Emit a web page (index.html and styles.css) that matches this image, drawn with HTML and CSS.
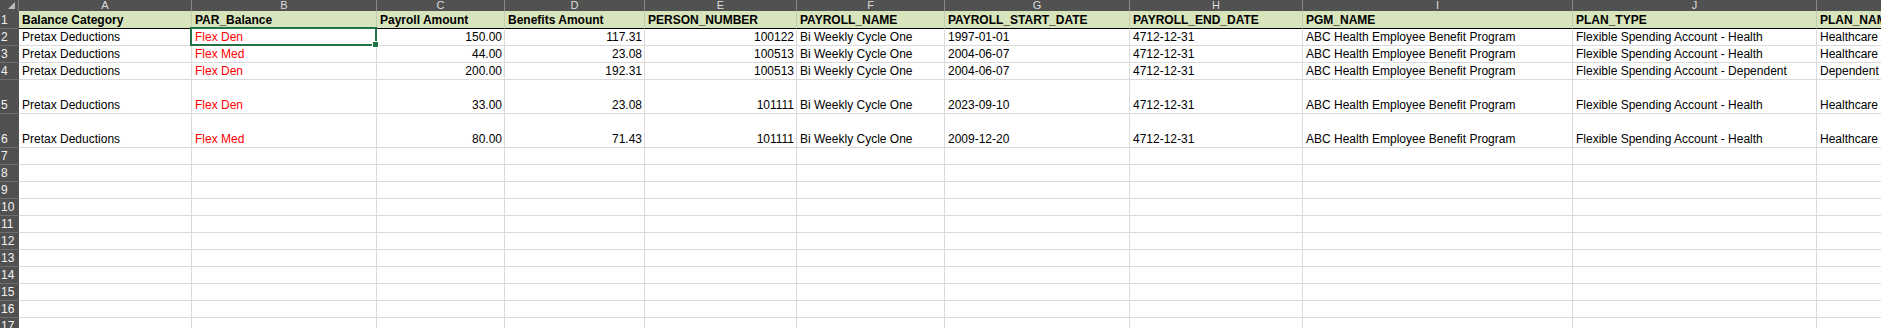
FILE: index.html
```html
<!DOCTYPE html>
<html>
<head>
<meta charset="utf-8">
<link rel="stylesheet" href="styles.css">
</head>
<body>
<div class="sheet">
  <div class="row colhdr">
    <div class="corner"><span class="tri"></span></div>
    <div class="ch">A</div><div class="ch">B</div><div class="ch">C</div><div class="ch">D</div><div class="ch">E</div><div class="ch">F</div><div class="ch">G</div><div class="ch">H</div><div class="ch">I</div><div class="ch">J</div><div class="ch">K</div>
  </div>
  <div class="row head">
    <div class="rh">1</div>
    <div class="c b">Balance Category</div>
    <div class="c b">PAR_Balance</div>
    <div class="c b">Payroll Amount</div>
    <div class="c b">Benefits Amount</div>
    <div class="c b">PERSON_NUMBER</div>
    <div class="c b">PAYROLL_NAME</div>
    <div class="c b">PAYROLL_START_DATE</div>
    <div class="c b">PAYROLL_END_DATE</div>
    <div class="c b">PGM_NAME</div>
    <div class="c b">PLAN_TYPE</div>
    <div class="c b">PLAN_NAME</div>
  </div>
  <div class="row">
    <div class="rh">2</div>
    <div class="c">Pretax Deductions</div>
    <div class="c red selected">Flex Den<span class="handle"></span></div>
    <div class="c r">150.00</div>
    <div class="c r">117.31</div>
    <div class="c r">100122</div>
    <div class="c">Bi Weekly Cycle One</div>
    <div class="c">1997-01-01</div>
    <div class="c">4712-12-31</div>
    <div class="c">ABC Health Employee Benefit Program</div>
    <div class="c">Flexible Spending Account - Health</div>
    <div class="c">Healthcare FSA</div>
  </div>
  <div class="row">
    <div class="rh">3</div>
    <div class="c">Pretax Deductions</div>
    <div class="c red">Flex Med</div>
    <div class="c r">44.00</div>
    <div class="c r">23.08</div>
    <div class="c r">100513</div>
    <div class="c">Bi Weekly Cycle One</div>
    <div class="c">2004-06-07</div>
    <div class="c">4712-12-31</div>
    <div class="c">ABC Health Employee Benefit Program</div>
    <div class="c">Flexible Spending Account - Health</div>
    <div class="c">Healthcare FSA</div>
  </div>
  <div class="row">
    <div class="rh">4</div>
    <div class="c">Pretax Deductions</div>
    <div class="c red">Flex Den</div>
    <div class="c r">200.00</div>
    <div class="c r">192.31</div>
    <div class="c r">100513</div>
    <div class="c">Bi Weekly Cycle One</div>
    <div class="c">2004-06-07</div>
    <div class="c">4712-12-31</div>
    <div class="c">ABC Health Employee Benefit Program</div>
    <div class="c">Flexible Spending Account - Dependent</div>
    <div class="c">Dependent Care FSA</div>
  </div>
  <div class="row tall">
    <div class="rh">5</div>
    <div class="c">Pretax Deductions</div>
    <div class="c red">Flex Den</div>
    <div class="c r">33.00</div>
    <div class="c r">23.08</div>
    <div class="c r">101111</div>
    <div class="c">Bi Weekly Cycle One</div>
    <div class="c">2023-09-10</div>
    <div class="c">4712-12-31</div>
    <div class="c">ABC Health Employee Benefit Program</div>
    <div class="c">Flexible Spending Account - Health</div>
    <div class="c">Healthcare FSA</div>
  </div>
  <div class="row tall">
    <div class="rh">6</div>
    <div class="c">Pretax Deductions</div>
    <div class="c red">Flex Med</div>
    <div class="c r">80.00</div>
    <div class="c r">71.43</div>
    <div class="c r">101111</div>
    <div class="c">Bi Weekly Cycle One</div>
    <div class="c">2009-12-20</div>
    <div class="c">4712-12-31</div>
    <div class="c">ABC Health Employee Benefit Program</div>
    <div class="c">Flexible Spending Account - Health</div>
    <div class="c">Healthcare FSA</div>
  </div>
  <div class="row"><div class="rh">7</div><div class="c"></div><div class="c"></div><div class="c"></div><div class="c"></div><div class="c"></div><div class="c"></div><div class="c"></div><div class="c"></div><div class="c"></div><div class="c"></div><div class="c"></div></div>
  <div class="row"><div class="rh">8</div><div class="c"></div><div class="c"></div><div class="c"></div><div class="c"></div><div class="c"></div><div class="c"></div><div class="c"></div><div class="c"></div><div class="c"></div><div class="c"></div><div class="c"></div></div>
  <div class="row"><div class="rh">9</div><div class="c"></div><div class="c"></div><div class="c"></div><div class="c"></div><div class="c"></div><div class="c"></div><div class="c"></div><div class="c"></div><div class="c"></div><div class="c"></div><div class="c"></div></div>
  <div class="row"><div class="rh">10</div><div class="c"></div><div class="c"></div><div class="c"></div><div class="c"></div><div class="c"></div><div class="c"></div><div class="c"></div><div class="c"></div><div class="c"></div><div class="c"></div><div class="c"></div></div>
  <div class="row"><div class="rh">11</div><div class="c"></div><div class="c"></div><div class="c"></div><div class="c"></div><div class="c"></div><div class="c"></div><div class="c"></div><div class="c"></div><div class="c"></div><div class="c"></div><div class="c"></div></div>
  <div class="row"><div class="rh">12</div><div class="c"></div><div class="c"></div><div class="c"></div><div class="c"></div><div class="c"></div><div class="c"></div><div class="c"></div><div class="c"></div><div class="c"></div><div class="c"></div><div class="c"></div></div>
  <div class="row"><div class="rh">13</div><div class="c"></div><div class="c"></div><div class="c"></div><div class="c"></div><div class="c"></div><div class="c"></div><div class="c"></div><div class="c"></div><div class="c"></div><div class="c"></div><div class="c"></div></div>
  <div class="row"><div class="rh">14</div><div class="c"></div><div class="c"></div><div class="c"></div><div class="c"></div><div class="c"></div><div class="c"></div><div class="c"></div><div class="c"></div><div class="c"></div><div class="c"></div><div class="c"></div></div>
  <div class="row"><div class="rh">15</div><div class="c"></div><div class="c"></div><div class="c"></div><div class="c"></div><div class="c"></div><div class="c"></div><div class="c"></div><div class="c"></div><div class="c"></div><div class="c"></div><div class="c"></div></div>
  <div class="row"><div class="rh">16</div><div class="c"></div><div class="c"></div><div class="c"></div><div class="c"></div><div class="c"></div><div class="c"></div><div class="c"></div><div class="c"></div><div class="c"></div><div class="c"></div><div class="c"></div></div>
  <div class="row"><div class="rh">17</div><div class="c"></div><div class="c"></div><div class="c"></div><div class="c"></div><div class="c"></div><div class="c"></div><div class="c"></div><div class="c"></div><div class="c"></div><div class="c"></div><div class="c"></div></div>
</div>
</body>
</html>
```

FILE: styles.css
```css
html, body {
  margin: 0;
  padding: 0;
  background: #ffffff;
  overflow: hidden;
}
.sheet {
  font-family: "Liberation Sans", Arial, sans-serif;
  font-size: 12px;
  color: #000;
  width: 1881px;
  height: 328px;
  overflow: hidden;
}
.row {
  display: grid;
  grid-template-columns: 19px 173px 185px 128px 140px 152px 148px 185px 173px 270px 244px 200px;
  height: 17px;
}
.row.tall { height: 34px; }
.colhdr { height: 11px; background: #515151; }
.head { height: 18px; }
.corner {
  position: relative;
  background: #515151;
  border-right: 1px solid #7a7a7a;
}
.tri {
  position: absolute;
  right: 3px;
  bottom: 2px;
  width: 0;
  height: 0;
  border-left: 7px solid transparent;
  border-bottom: 7px solid #bdbdbd;
}
.ch {
  box-sizing: border-box;
  border-right: 1px solid #8a8a8a;
  color: #dcdcdc;
  text-align: center;
  line-height: 11px;
  font-size: 11px;
}
.rh {
  box-sizing: border-box;
  background: #515151;
  color: #f2f2f2;
  border-right: 1px solid #515151;
  border-bottom: 1px solid #6e6e6e;
  font-size: 12px;
  padding-left: 1px;
  display: flex;
  align-items: flex-end;
  line-height: 15px;
}
.c {
  position: relative;
  box-sizing: border-box;
  border-right: 1px solid #dadada;
  border-bottom: 1px solid #dadada;
  padding: 0 2px 0 3px;
  white-space: nowrap;
  overflow: hidden;
  display: flex;
  align-items: flex-end;
  line-height: 15px;
}
.head .c {
  background: #d8e4bc;
  border-bottom: 1px solid #000;
  font-weight: bold;
  line-height: 16px;
}
.head .c.b { border-right-color: #c5ceb0; }
.head .rh { border-bottom-color: #6e6e6e; }
.c.r { justify-content: flex-end; }
.c.red { color: #ff0000; }
.c.selected { overflow: visible; }
.c.selected::after {
  content: "";
  position: absolute;
  left: -2px;
  top: -2px;
  right: -1px;
  bottom: -1px;
  border: 2px solid #217346;
  pointer-events: none;
}
.handle {
  position: absolute;
  right: -3px;
  bottom: -3px;
  width: 5px;
  height: 5px;
  background: #217346;
  border: 1px solid #fff;
  z-index: 2;
}
```
